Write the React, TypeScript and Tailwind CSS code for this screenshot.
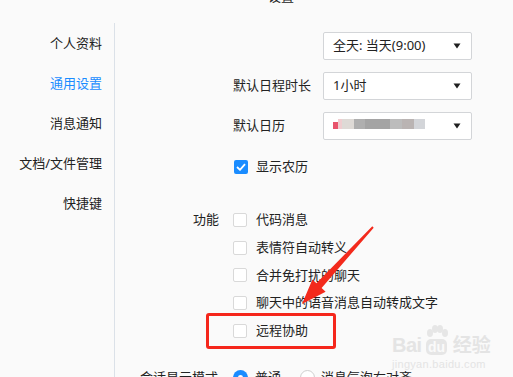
import React from "react";

const FONT = '"Noto Sans", "Noto Sans CJK SC", sans-serif';

function Caret() {
  return (
    <svg width="8" height="6" viewBox="0 0 8 6" className="ml-auto mr-[10px]">
      <path d="M0.5 0.5 L7.5 0.5 L4 5.5 Z" fill="#1f1f1f" />
    </svg>
  );
}

function Select({ children }: { children?: React.ReactNode }) {
  return (
    <div className="w-[149px] h-[28px] border border-[#d3d5d8] bg-white rounded-[2px] flex items-center pl-[9px] text-[13px] text-[#222]">
      {children}
      <Caret />
    </div>
  );
}

function Box({ checked }: { checked?: boolean }) {
  return checked ? (
    <div className="w-[14px] h-[14px] rounded-[2px] bg-[#1a8cff] flex items-center justify-center shrink-0">
      <svg width="10" height="8" viewBox="0 0 10 8">
        <path d="M1 4 L4 6.8 L9 1.2" stroke="#fff" strokeWidth="1.8" fill="none" />
      </svg>
    </div>
  ) : (
    <div className="w-[14px] h-[14px] rounded-[2px] bg-white border border-[#d9d9d9] shrink-0" />
  );
}

export default function App() {
  const navItems = ["个人资料", "通用设置", "消息通知", "文档/文件管理", "快捷键"];
  const features = ["代码消息", "表情符自动转义", "合并免打扰的聊天", "聊天中的语音消息自动转成文字", "远程协助"];
  return (
    <div
      className="relative w-[513px] h-[377px] overflow-hidden bg-[#fafafa] text-[#222]"
      style={{ fontFamily: FONT }}
    >
      <div className="h-[23px] flex flex-col">
        <div className="-mt-[12px] pl-[268px] text-[13px] leading-[16px]">设置</div>
      </div>
      <div className="flex">
        <div className="w-[115px] border-r border-[#dbe1e8] h-[400px] pr-[12px] flex flex-col items-end text-[13px]">
          {navItems.map((n, i) => (
            <div
              key={n}
              className={`h-[40px] leading-[40px] ${i === 1 ? "text-[#1a8cff]" : "text-[#222]"}`}
            >
              {n}
            </div>
          ))}
        </div>
        <div className="flex-1 pt-[9px] text-[13px]">
          <div className="flex items-center h-[28px] pl-[118px]">
            <div className="w-[78px] mr-[12px]" />
            <Select>全天: 当天(9:00)</Select>
          </div>
          <div className="flex items-center h-[28px] pl-[118px] mt-[12px]">
            <div className="w-[78px] mr-[12px] whitespace-nowrap">默认日程时长</div>
            <Select>1小时</Select>
          </div>
          <div className="flex items-center h-[28px] pl-[118px] mt-[12px]">
            <div className="w-[78px] mr-[12px] whitespace-nowrap">默认日历</div>
            <Select>
              <div className="flex items-end h-[10px] -mt-[4px]">
                <div className="w-[5px] h-[7px] bg-[#e8546c]" />
                <div className="w-[4px] h-[10px] bg-[#f0cdd0]" />
                <div className="w-[12px] h-[10px] bg-[#dedad6]" />
                <div className="w-[11px] h-[10px] bg-[#afafaf]" />
                <div className="w-[25px] h-[10px] bg-[#a4a4a4]" />
                <div className="w-[12px] h-[10px] bg-[#bcbcbc]" />
                <div className="w-[12px] h-[10px] bg-[#bab4b3]" />
                <div className="w-[11px] h-[10px] bg-[#d3d5d9]" />
              </div>
            </Select>
          </div>
          <div className="flex items-center h-[28px] pl-[119px] mt-[13px]">
            <Box checked />
            <span className="ml-[8px]">显示农历</span>
          </div>
          <div className="flex mt-[25px]">
            <div className="w-[118px] pr-[14px] text-right h-[27.75px] leading-[27.75px]">功能</div>
            <div className="flex flex-col">
              {features.map((f) => (
                <div key={f} className="flex items-center h-[27.75px] whitespace-nowrap">
                  <Box />
                  <span className="ml-[9px]">{f}</span>
                </div>
              ))}
            </div>
          </div>
          <div className="flex items-center h-[28px] mt-[19px] whitespace-nowrap">
            <div className="w-[118px] pr-[15px] text-right">会话显示模式</div>
            <div className="w-[15px] h-[15px] rounded-full bg-[#1a8cff] flex items-center justify-center">
              <div className="w-[5px] h-[5px] rounded-full bg-white" />
            </div>
            <span className="ml-[7px]">普通</span>
            <div className="ml-[19px] w-[15px] h-[15px] rounded-full bg-white border border-[#cfcfcf]" />
            <span className="ml-[6px]">消息气泡右对齐</span>
          </div>
        </div>
      </div>

      {/* annotation: red box */}
      <div className="absolute left-[206px] top-[313px] w-[130px] h-[36px] border-[3px] border-[#f5261b] rounded-[3px]" />

      {/* annotation: arrow */}
      <svg className="absolute left-0 top-0 pointer-events-none" width="513" height="377">
        <polygon
          points="373.7,227.7 321.6,288 325.6,291.7 302,304 312.4,279.5 316.4,283.2 372.3,226.3"
          fill="#f32a1c"
        />
      </svg>

      {/* watermark */}
      <div className="absolute left-[392px] top-[325px] pointer-events-none select-none text-[#e4e4e4]">
        <div className="flex items-end leading-none">
          <span className="text-[20px] font-bold tracking-tight" style={{ fontFamily: '"Liberation Sans", sans-serif' }}>Bai</span>
          <div className="relative ml-[2px] flex flex-col items-center">
            <svg width="26" height="14" viewBox="0 0 26 14">
              <ellipse cx="6" cy="8" rx="3" ry="4" fill="#e6e6e6" />
              <ellipse cx="11" cy="4" rx="3" ry="4" fill="#e6e6e6" />
              <ellipse cx="16" cy="4" rx="3" ry="4" fill="#e6e6e6" />
              <ellipse cx="21" cy="8" rx="3" ry="4" fill="#e6e6e6" />
            </svg>
            <div className="bg-[#e6e6e6] text-[#fafafa] rounded-[5px] px-[2px] text-[14px] font-bold leading-[16px]" style={{ fontFamily: '"Liberation Sans", sans-serif' }}>du</div>
          </div>
          <span className="ml-[3px] text-[19px] font-bold">经验</span>
        </div>
        <div className="text-[11px] leading-[12px] mt-[3px] tracking-[0.3px]" style={{ fontFamily: '"Liberation Sans", sans-serif' }}>jingyan.baidu.com</div>
      </div>
    </div>
  );
}
